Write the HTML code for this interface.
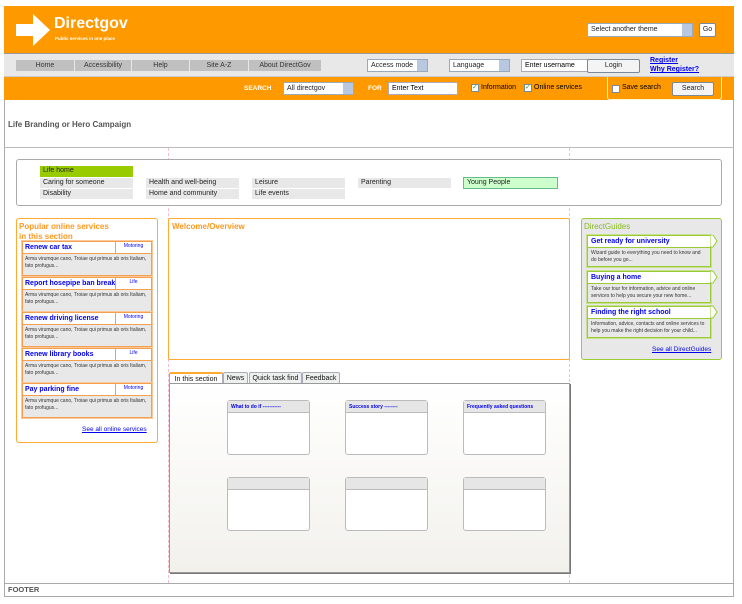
<!DOCTYPE html>
<html><head><meta charset="utf-8"><style>
*{margin:0;padding:0;box-sizing:border-box}
body{width:742px;height:604px;position:relative;background:#fff;font-family:"Liberation Sans",Arial,sans-serif;overflow:hidden}
.a{position:absolute}
.btn{position:absolute;background:#c0c0c0;font-size:7px;color:#333;text-align:center;line-height:11px}
.sel{position:absolute;background:#fff;border:1px solid #9ab;font-size:7px;color:#222;line-height:11px;padding-left:3px}
.sel:after{content:"";position:absolute;right:0;top:0;width:10px;height:100%;background:#b8c8e0}
.pb{position:absolute;background:#fff;border:1px solid #7a8a99;border-radius:2px;font-size:7px;text-align:center;color:#222}
.cb{position:absolute;width:8px;height:8px;background:#fff;border:1px solid #7a8a99}
.t{position:absolute;font-size:7px;color:#000;white-space:nowrap}
.ln{position:absolute;background:#e8e8e8;font-size:7px;color:#222;line-height:10px;padding-left:3px}
.it{position:absolute;left:22px;width:130px;border:1px solid #f5a050;box-shadow:0 0 0 1px #fbc89a}
.it .h{height:12px;background:#fff;border-bottom:1px solid #f5a050;font-size:7px;font-weight:bold;color:#0000ee;padding:2px 0 0 2px;position:relative}
.it .h span{position:absolute;right:0;top:0;width:36px;height:11px;border-left:1px solid #f5a050;font-size:5px;font-weight:normal;text-align:center;line-height:9px;color:#0000ee}
.it .b{background:#e8e8e8;font-size:5px;color:#333;padding:2px 2px;line-height:7px;height:21px}
.gi{position:absolute;left:587px;width:124px;border:1px solid #99cc33;box-shadow:0 0 0 1px #c8e090}
.gi .h{height:12px;background:#fff;border-bottom:1px solid #99cc33;font-size:7px;font-weight:bold;color:#0000ee;padding:2px 0 0 3px}
.gi .b{background:#e8e8e8;font-size:5px;color:#333;padding:2px 3px;line-height:7px}
.mb{position:absolute;width:83px;border:1px solid #bbb;border-radius:3px;background:#fff}
.mb .h{height:12px;background:#e6e6e6;border-bottom:1px solid #bbb;font-size:5px;font-weight:bold;color:#0000ee;padding:3px 3px}
.tab{position:absolute;top:372px;height:12px;border:1px solid #aab;border-bottom:none;background:#eef0f0;font-size:7px;color:#111;text-align:center;line-height:11px;border-radius:2px 2px 0 0}
</style></head><body>
<div class="a" style="left:4px;top:6px;width:730px;height:47px;background:#ff9900"></div>
<svg class="a" style="left:16px;top:14px" width="35" height="33"><polygon points="0,10 17,10 17,0 34,16 17,32 17,22 0,22" fill="#fff"/></svg>
<div class="a" style="left:54px;top:15px;font-size:16px;font-weight:bold;color:#fff">Directgov</div>
<div class="a" style="left:55px;top:36px;font-size:4.5px;font-weight:bold;color:#fff">Public services in one place</div>
<div class="sel" style="left:587px;top:23px;width:106px;height:14px;line-height:12px">Select another theme</div>
<div class="pb" style="left:699px;top:23px;width:17px;height:14px;line-height:12px">Go</div>
<div class="a" style="left:4px;top:53px;width:730px;height:24px;background:#e8e8e8;border-top:1px solid #999;border-bottom:1px solid #ccc"></div>
<div class="btn" style="left:16px;top:60px;width:58px">Home</div>
<div class="btn" style="left:75px;top:60px;width:56px">Accessibility</div>
<div class="btn" style="left:132px;top:60px;width:57px">Help</div>
<div class="btn" style="left:190px;top:60px;width:58px">Site A-Z</div>
<div class="btn" style="left:249px;top:60px;width:72px">About DirectGov</div>
<div class="sel" style="left:367px;top:59px;width:61px;height:13px">Access mode</div>
<div class="sel" style="left:449px;top:59px;width:61px;height:13px">Language</div>
<div class="a" style="left:521px;top:59px;width:67px;height:13px;background:#fff;border:1px solid #aab;font-size:7px;line-height:11px;padding-left:3px">Enter username</div>
<div class="pb" style="left:587px;top:59px;width:53px;height:14px;line-height:12px;background:#f4f4f4">Login</div>
<div class="a" style="left:650px;top:56px;font-size:7px;font-weight:bold;color:#0000ee;text-decoration:underline;line-height:9px">Register<br>Why Register?</div>
<div class="a" style="left:4px;top:77px;width:730px;height:23px;background:#ff9900"></div>
<div class="t" style="left:244px;top:85px;color:#fff;font-weight:bold;font-size:6.5px">SEARCH</div>
<div class="sel" style="left:283px;top:82px;width:71px;height:13px">All directgov</div>
<div class="t" style="left:368px;top:85px;color:#fff;font-weight:bold;font-size:6.5px">FOR</div>
<div class="a" style="left:388px;top:82px;width:70px;height:13px;background:#fff;border:1px solid #aab;font-size:7px;line-height:11px;padding-left:3px">Enter Text</div>
<div class="cb" style="left:471px;top:84px;color:#393;font-size:7px;line-height:6px">✓</div>
<div class="t" style="left:481px;top:84px">Information</div>
<div class="cb" style="left:524px;top:84px;color:#393;font-size:7px;line-height:6px">✓</div>
<div class="t" style="left:534px;top:84px">Online services</div>
<div class="a" style="left:607px;top:77px;width:115px;height:23px;border:1px solid #fff3d0;border-top:none;border-radius:0 0 3px 3px"></div>
<div class="cb" style="left:612px;top:85px"></div>
<div class="t" style="left:622px;top:84px">Save search</div>
<div class="pb" style="left:672px;top:82px;width:42px;height:14px;line-height:12px;background:#f4f4f4">Search</div>
<div class="a" style="left:4px;top:100px;width:1px;height:497px;background:#aaa"></div>
<div class="a" style="left:733px;top:100px;width:1px;height:497px;background:#aaa"></div>
<div class="t" style="left:8px;top:120px;font-size:8px;font-weight:bold;color:#555">Life Branding or Hero Campaign</div>
<div class="a" style="left:4px;top:147px;width:730px;height:1px;background:#bbb"></div>
<div class="a" style="left:168px;top:148px;height:435px;border-left:1px dashed #f6bcd0"></div>
<div class="a" style="left:569px;top:148px;height:435px;border-left:1px dashed #f6bcd0"></div>
<div class="a" style="left:16px;top:159px;width:706px;height:47px;border:1px solid #aaa;border-radius:3px;background:#fff"></div>
<div class="ln" style="left:40px;top:166px;width:93px;height:11px;background:#99cc00">Life home</div>
<div class="ln" style="left:40px;top:178px;width:93px">Caring for someone</div>
<div class="ln" style="left:146px;top:178px;width:93px">Health and well-being</div>
<div class="ln" style="left:252px;top:178px;width:93px">Leisure</div>
<div class="ln" style="left:358px;top:178px;width:93px">Parenting</div>
<div class="ln" style="left:463px;top:177px;width:95px;height:12px;background:#ccffcc;border:1px solid #66bb88">Young People</div>
<div class="ln" style="left:40px;top:189px;width:93px">Disability</div>
<div class="ln" style="left:146px;top:189px;width:93px">Home and community</div>
<div class="ln" style="left:252px;top:189px;width:93px">Life events</div>
<div class="a" style="left:16px;top:218px;width:142px;height:225px;border:1px solid #ffaa33;border-radius:3px"></div>
<div class="a" style="left:19px;top:222px;font-size:8px;font-weight:bold;color:#ff9922;line-height:10px">Popular online services<br>in this section</div>
<div class="it" style="top:241px"><div class="h">Renew car tax<span>Motoring</span></div><div class="b">Arma virumque cano, Troiae qui primus ab oris Italiam, fato profugus...</div></div>
<div class="it" style="top:277px"><div class="h">Report hosepipe ban break<span>Life</span></div><div class="b">Arma virumque cano, Troiae qui primus ab oris Italiam, fato profugus...</div></div>
<div class="it" style="top:312px"><div class="h">Renew driving license<span>Motoring</span></div><div class="b">Arma virumque cano, Troiae qui primus ab oris Italiam, fato profugus...</div></div>
<div class="it" style="top:348px"><div class="h">Renew library books<span>Life</span></div><div class="b">Arma virumque cano, Troiae qui primus ab oris Italiam, fato profugus...</div></div>
<div class="it" style="top:383px"><div class="h">Pay parking fine<span>Motoring</span></div><div class="b">Arma virumque cano, Troiae qui primus ab oris Italiam, fato profugus...</div></div>
<div class="t" style="left:82px;top:426px;font-size:6.5px;color:#0000ee;text-decoration:underline">See all online services</div>
<div class="a" style="left:168px;top:218px;width:402px;height:142px;border:1px solid #ffaa33;border-radius:2px"></div>
<div class="a" style="left:172px;top:222px;font-size:8px;font-weight:bold;color:#ff9922">Welcome/Overview</div>
<div class="tab" style="left:169px;width:54px;background:#fff;border-top:2px solid #ffaa33">In this section</div>
<div class="tab" style="left:223px;width:25px">News</div>
<div class="tab" style="left:249px;width:53px">Quick task find</div>
<div class="tab" style="left:302px;width:38px">Feedback</div>
<div class="a" style="left:169px;top:383px;width:401px;height:190px;border:1px solid #999;background:linear-gradient(#fff,#f2f1ec);box-shadow:1px 1px 0 #777"></div>
<div class="mb" style="left:227px;top:400px;height:55px"><div class="h">What to do if -----------</div></div>
<div class="mb" style="left:345px;top:400px;height:55px"><div class="h">Success story --------</div></div>
<div class="mb" style="left:463px;top:400px;height:55px"><div class="h">Frequently asked questions</div></div>
<div class="mb" style="left:227px;top:477px;height:54px"><div class="h"></div></div>
<div class="mb" style="left:345px;top:477px;height:54px"><div class="h"></div></div>
<div class="mb" style="left:463px;top:477px;height:54px"><div class="h"></div></div>
<div class="a" style="left:581px;top:218px;width:141px;height:142px;border:1px solid #99cc33;border-radius:3px;background:#e8e8e8"></div>
<div class="a" style="left:584px;top:222px;font-size:8px;color:#88bb22">DirectGuides</div>
<div class="gi" style="top:235px"><div class="h">Get ready for university</div><div class="b">Wizard guide to everything you need to know and do before you go...</div></div>
<div class="gi" style="top:271px"><div class="h">Buying a home</div><div class="b">Take our tour for information, advice and online services to help you secure your new home...</div></div>
<div class="gi" style="top:306px"><div class="h">Finding the right school</div><div class="b">Information, advice, contacts and online services to help you make the right decision for your child...</div></div>
<svg class="a" style="left:710px;top:235px" width="8" height="90"><polygon points="0,0 3,0 7,6 3,12 0,12" fill="#fff" stroke="#99cc33"/><polygon points="0,36 3,36 7,42 3,48 0,48" fill="#fff" stroke="#99cc33"/><polygon points="0,71 3,71 7,77 3,83 0,83" fill="#fff" stroke="#99cc33"/></svg>
<div class="t" style="left:652px;top:346px;font-size:6.5px;color:#0000ee;text-decoration:underline">See all DirectGuides</div>
<div class="a" style="left:4px;top:583px;width:730px;height:1px;background:#aaa"></div>
<div class="t" style="left:8px;top:585px;font-size:7.5px;font-weight:bold;color:#555">FOOTER</div>
<div class="a" style="left:4px;top:596px;width:730px;height:1px;background:#aaa"></div>
</body></html>
